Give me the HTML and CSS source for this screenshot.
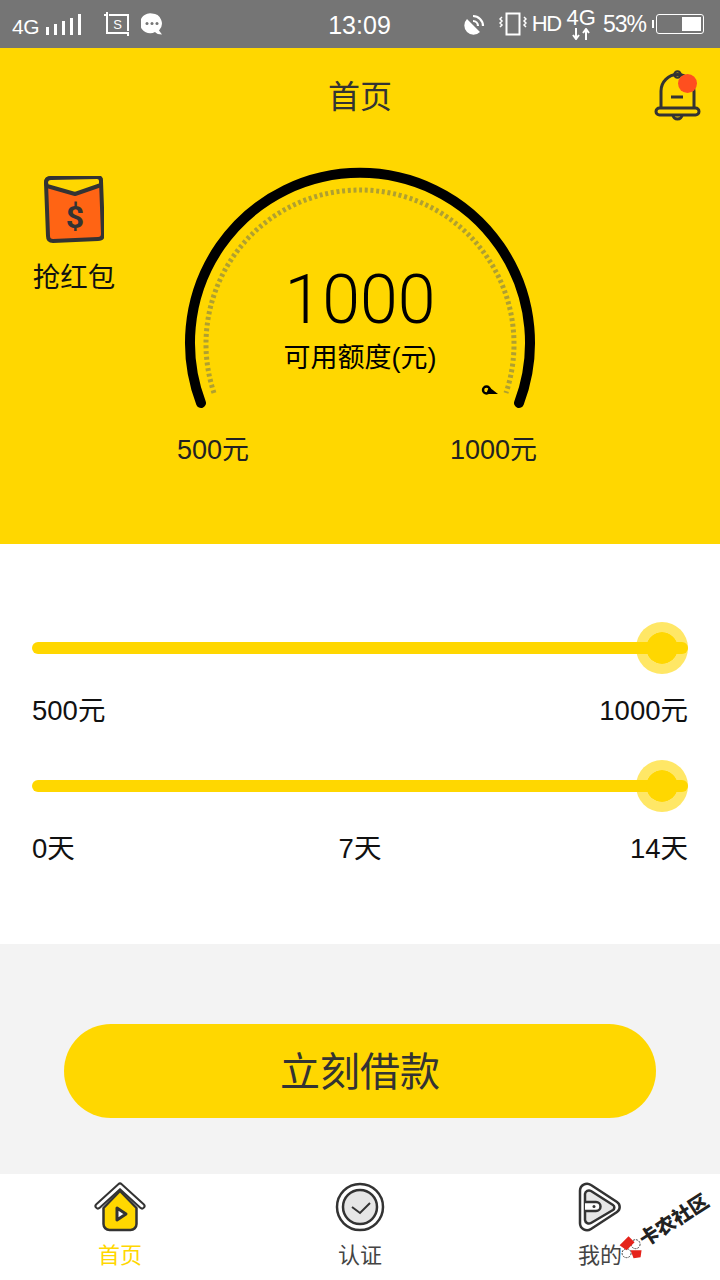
FILE: index.html
```html
<!DOCTYPE html>
<html lang="zh-CN">
<head>
  <meta charset="UTF-8">
  <title>首页</title>
  <link rel="stylesheet" href="styles.css">
</head>
<body>
  <div class="phone">
    <div class="status-bar">
      <div class="status-left">
        <span class="net">4G</span>
        <svg class="signal" width="36" height="24" viewBox="0 0 36 24"><path d="M1.500 15v8M9.500 12v11M17.500 9v14M25.500 6v17M33.500 2v21" stroke="#fff" stroke-width="3"/></svg>
        <svg class="shot" width="27" height="25" viewBox="0 0 27 25"><path d="M3 0v3M0 3h3v18h21v3M5 3h19v16" fill="none" stroke="#fff" stroke-width="2"/><text x="13.500" y="17" class="shot-s">S</text></svg>
        <svg class="chat" width="22" height="22" viewBox="0 0 22 22"><path d="M11 0.500a10 10 0 0 1 7 17l3 4q-5 0-7-2.500a10 10 0 1 1-3-18.500z" fill="#fff"/><circle cx="6" cy="10.500" r="1.500" fill="#757575"/><circle cx="11" cy="10.500" r="1.500" fill="#757575"/><circle cx="16" cy="10.500" r="1.500" fill="#757575"/></svg>
      </div>
      <div class="clock">13:09</div>
      <div class="status-right">
        <svg class="rotate" width="22" height="22" viewBox="0 0 22 22"><path d="M3 6a9 9 0 1 0 13 13z" fill="#fff"/><path d="M9 3a10 10 0 0 1 10 10M9 8a5 5 0 0 1 5 5" fill="none" stroke="#fff" stroke-width="2.200"/></svg>
        <svg class="vibrate" width="28" height="26" viewBox="0 0 28 26"><rect x="7.500" y="2.500" width="13" height="21" fill="none" stroke="#fff" stroke-width="2"/><path d="M3 6l-2 2 2 2-2 2 2 2-2 2M25 6l2 2-2 2 2 2-2 2 2 2" fill="none" stroke="#fff" stroke-width="1.500"/></svg>
        <span class="hd">HD</span>
        <div class="net-stack">
          <span class="net-small">4G</span>
          <svg width="20" height="12" viewBox="0 0 20 12"><path d="M5 0v10M2 7l3 4 3-4M15 12V2M12 5l3-4 3 4" fill="none" stroke="#fff" stroke-width="2"/></svg>
        </div>
        <span class="percent">53%</span>
        <div class="battery-tip"></div>
        <div class="battery"><div class="battery-fill"></div></div>
      </div>
    </div>

    <div class="hero">
      <div class="hero-top">
        <div></div>
        <h1>首页</h1>
        <svg class="bell" width="48" height="54" viewBox="0 0 48 54">
          <path d="M7 38V21a16.500 16.500 0 0 1 33 0v17" fill="none" stroke="#333" stroke-width="3"/>
          <circle cx="23.500" cy="4.500" r="3.200" fill="none" stroke="#333" stroke-width="2.200"/>
          <rect x="2" y="38" width="43" height="7" rx="3.500" fill="none" stroke="#333" stroke-width="3"/>
          <path d="M19 45a4.500 4 0 0 0 9 0" fill="none" stroke="#333" stroke-width="3"/>
          <path d="M17 27h12" stroke="#333" stroke-width="3"/>
          <circle cx="33.500" cy="13.500" r="9.500" fill="#ff4f1f"/>
        </svg>
      </div>
      <div class="hero-body">
        <div class="packet">
          <svg width="60" height="68" viewBox="0 0 60 68">
            <path d="M2 7q0-5 5-5L53 1q4 0 4 4l2 53q0 5-5 5L9 65q-5 0-5-5z" fill="#ff6414" stroke="#333" stroke-width="4" stroke-linejoin="round"/>
            <path d="M2 7q0-5 5-5L53 1q4 0 4 4v4L31 18 3 10z" fill="#ffd700" stroke="#333" stroke-width="4" stroke-linejoin="round"/>
            <text x="31" y="52" class="dollar">$</text>
          </svg>
          <span>抢红包</span>
        </div>
        <div class="gauge">
          <svg class="dial" width="366" height="250" viewBox="0 0 366 250">
            <path d="M37 233A154 154 0 1 1 329 233" fill="none" stroke="#b0a030" stroke-width="5" stroke-dasharray="3 2.700"/>
            <path d="M24 243A170 170 0 1 1 342 243" fill="none" stroke="#000" stroke-width="10" stroke-linecap="round"/>
            <circle cx="309.500" cy="230" r="3.500" fill="none" stroke="#000" stroke-width="2.400"/>
            <path d="M312 227l9 7h-12z" fill="#000"/>
          </svg>
          <div class="amount">
            <div class="amount-num">1000</div>
            <div class="amount-label">可用额度(元)</div>
          </div>
          <div class="gauge-range">
            <span>500元</span>
            <span>1000元</span>
          </div>
        </div>
      </div>
    </div>

    <div class="sliders">
      <div class="slider">
        <div class="track"><div class="thumb"></div></div>
        <div class="ticks"><span>500元</span><span>1000元</span></div>
      </div>
      <div class="slider">
        <div class="track"><div class="thumb"></div></div>
        <div class="ticks"><span>0天</span><span class="tick-mid">7天</span><span>14天</span></div>
      </div>
    </div>

    <div class="action">
      <button class="borrow">立刻借款</button>
    </div>

    <div class="tabs">
      <div class="tab active">
        <svg width="52" height="50" viewBox="0 0 52 50">
          <path d="M26 9L9.500 26v16a6 6 0 0 0 6 6h21a6 6 0 0 0 6-6V26z" fill="#ffd700" stroke="#333" stroke-width="2.500" stroke-linejoin="round"/>
          <path d="M4 24L26 4l22 20" fill="none" stroke="#333" stroke-width="7" stroke-linecap="round" stroke-linejoin="round"/>
          <path d="M4 24L26 4l22 20" fill="none" stroke="#fff" stroke-width="3" stroke-linecap="round" stroke-linejoin="round"/>
          <path d="M23 26l9 6-9 6z" fill="#fff" stroke="#333" stroke-width="3" stroke-linejoin="round"/>
        </svg>
        <span>首页</span>
      </div>
      <div class="tab">
        <svg width="50" height="50" viewBox="0 0 50 50">
          <circle cx="25" cy="25" r="23" fill="#fff" stroke="#333" stroke-width="2.500"/>
          <circle cx="25" cy="25" r="17" fill="#e6e6e6" stroke="#333" stroke-width="2.500"/>
          <path d="M17 25l8 6 10-10" fill="none" stroke="#333" stroke-width="2"/>
        </svg>
        <span>认证</span>
      </div>
      <div class="tab">
        <svg width="44" height="50" viewBox="0 0 44 50">
          <path d="M2 9a7 7 0 0 1 11-6l26 17a6 6 0 0 1 0 10L13 47a7 7 0 0 1-11-6z" fill="#fff" stroke="#333" stroke-width="2.500"/>
          <path d="M7 12a4 4 0 0 1 6-3l22 14a3 3 0 0 1 0 5L13 41a4 4 0 0 1-6-3z" fill="#e6e6e6" stroke="#333" stroke-width="2.500"/>
          <path d="M7 20h11a4.500 4.500 0 0 1 0 9H7" fill="#fff" stroke="#333" stroke-width="2.500"/>
          <circle cx="16" cy="24.500" r="1.500" fill="#333"/>
        </svg>
        <span>我的</span>
      </div>
    </div>

    <div class="watermark">
      <svg width="24" height="24" viewBox="0 0 24 24">
        <g transform="rotate(33 12 12)">
          <circle cx="17" cy="9" r="4.500" fill="#fff" stroke="#444" stroke-width="1" stroke-dasharray="2 1"/>
          <circle cx="8" cy="18" r="4.500" fill="#fff" stroke="#444" stroke-width="1" stroke-dasharray="2 1"/>
          <path d="M1 10l9-9 6 6-8 8zM12 15h11l-1 7-7 1z" fill="#e5231b"/>
        </g>
      </svg>
      <span>卡农社区</span>
    </div>
  </div>
</body>
</html>
```

FILE: styles.css
```css
* {
  box-sizing: border-box;
}
body {
  margin: 0;
  font-family: "Liberation Sans", "Noto Sans CJK SC", sans-serif;
  background: white;
}
.phone {
  position: relative;
  width: 720px;
  height: 1280px;
  overflow: hidden;
  display: flex;
  flex-direction: column;
}

/* status bar */
.status-bar {
  height: 48px;
  background-color: #757575;
  color: white;
  display: grid;
  grid-template-columns: 1fr auto 1fr;
  align-items: center;
  padding: 0 16px 0 12px;
}
.status-left, .status-right {
  display: flex;
  align-items: center;
}
.status-right {
  justify-content: flex-end;
}
.net {
  font-size: 21px;
  margin-top: 5px;
  letter-spacing: -0.5px;
}
.signal {
  margin-left: 7px;
}
.shot {
  margin-left: 22px;
}
.shot-s {
  font-size: 13px;
  fill: white;
  text-anchor: middle;
}
.chat {
  margin-left: 10px;
}
.clock {
  font-size: 25px;
  margin: 3px 0 0 3px;
}
.rotate {
  margin-right: 13px;
}
.vibrate {
  margin-right: 5px;
}
.hd {
  font-size: 22px;
  letter-spacing: -1.5px;
  margin-right: 6px;
}
.net-stack {
  display: flex;
  flex-direction: column;
  align-items: center;
  margin-right: 7px;
}
.net-small {
  font-size: 22px;
  line-height: 20px;
}
.percent {
  font-size: 23px;
  letter-spacing: -1px;
  margin-right: 6px;
}
.battery-tip {
  width: 2px;
  height: 8px;
  background: white;
}
.battery {
  width: 48px;
  height: 20px;
  margin-left: 2px;
  border: 1px solid white;
  border-radius: 3px;
  padding: 2px;
  display: flex;
  justify-content: flex-end;
}
.battery-fill {
  width: 19px;
  background: white;
}

/* yellow hero */
.hero {
  height: 496px;
  background-color: #ffd700;
}
.hero-top {
  height: 96px;
  display: grid;
  grid-template-columns: 1fr auto 1fr;
  align-items: center;
  padding: 0 18px;
}
.hero-top h1 {
  margin: 0 0 4px;
  font-size: 32px;
  font-weight: normal;
  color: #333;
}
.bell {
  justify-self: end;
  margin-top: 2px;
}
.hero-body {
  display: flex;
  padding-left: 33px;
}
.packet {
  width: 82px;
  margin-top: 32px;
  margin-right: 62px;
  display: flex;
  flex-direction: column;
  align-items: center;
  gap: 11px;
  font-size: 27.5px;
  color: #111;
  white-space: nowrap;
}
.dollar {
  font-family: Roboto, sans-serif;
  font-size: 32px;
  font-weight: bold;
  fill: #333;
  text-anchor: middle;
}
.gauge {
  position: relative;
  width: 366px;
  margin-top: 16px;
}
.dial {
  display: block;
}
.amount {
  position: absolute;
  top: 100px;
  left: 0;
  right: 0;
  text-align: center;
  color: #000;
}
.amount-num {
  font-family: Roboto, sans-serif;
  font-weight: 300;
  font-size: 68px;
  line-height: 80px;
}
.amount-label {
  font-size: 27px;
  line-height: 36px;
}
.gauge-range {
  display: flex;
  justify-content: space-between;
  padding-right: 6px;
  margin-top: 18px;
  font-size: 27px;
  color: #222;
}

/* sliders */
.sliders {
  height: 400px;
  background: white;
  padding: 98px 32px 0;
}
.slider {
  margin-bottom: 53px;
}
.track {
  position: relative;
  height: 12px;
  border-radius: 6px;
  background-color: #ffd700;
}
.thumb {
  position: absolute;
  right: 0;
  top: -20px;
  width: 52px;
  height: 52px;
  border: 10px solid rgba(255, 215, 0, 0.6);
  border-radius: 50%;
  background-color: #ffd700;
  background-clip: padding-box;
}
.ticks {
  display: flex;
  margin-top: 41px;
  font-size: 27.5px;
  line-height: 32px;
  color: #111;
}
.ticks span {
  flex: 1;
}
.ticks span:last-child {
  text-align: right;
}
.ticks .tick-mid {
  text-align: center;
}

/* button */
.action {
  height: 230px;
  background-color: #f3f3f3;
  padding: 80px 64px 0;
}
.borrow {
  width: 100%;
  height: 94px;
  padding: 0 0 4px;
  border: none;
  border-radius: 47px;
  background-color: #ffd700;
  color: #333;
  font-family: inherit;
  font-size: 40px;
}

/* tabs */
.tabs {
  flex: 1;
  display: grid;
  grid-template-columns: repeat(3, 1fr);
  background: white;
  padding-top: 8px;
}
.tab {
  display: flex;
  flex-direction: column;
  align-items: center;
  gap: 10px;
  font-size: 22px;
  color: #444;
}
.tab span {
  line-height: 28px;
}
.tab.active {
  color: #ffd700;
}

.watermark {
  position: absolute;
  left: 612px;
  top: 1211px;
  display: flex;
  align-items: center;
  transform: rotate(-33deg);
  font-size: 19.5px;
  font-weight: 900;
  color: #222;
  white-space: nowrap;
}
.watermark svg {
  flex: none;
  overflow: visible;
}
```
